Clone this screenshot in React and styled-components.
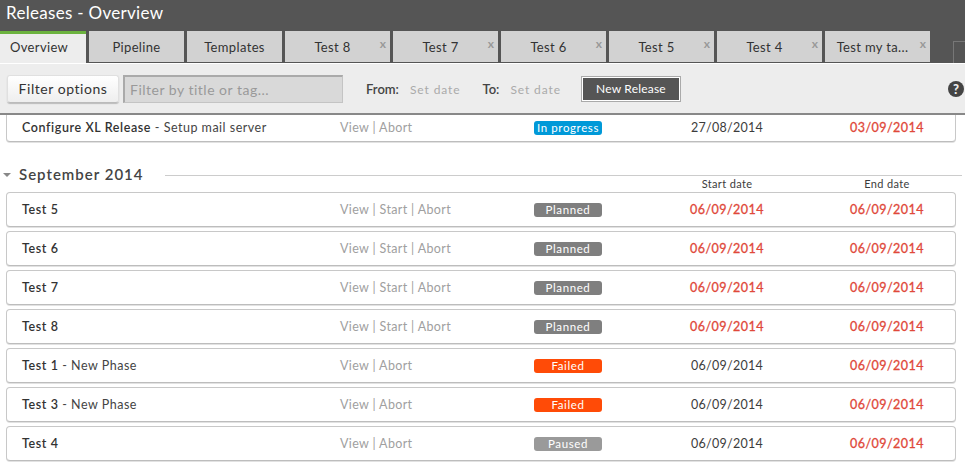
import React from 'react'
import styled, { createGlobalStyle } from 'styled-components'

const Global = createGlobalStyle`
    html, body {
        margin: 0;
        padding: 0;
        background: #fff;
        overflow: hidden;
    }
    body {
        font-family: Lato, "Open Sans", sans-serif;
        color: #333;
    }
`

const tabs = [
    { label: 'Overview', active: true },
    { label: 'Pipeline' },
    { label: 'Templates' },
    { label: 'Test 8', closable: true },
    { label: 'Test 7', closable: true },
    { label: 'Test 6', closable: true },
    { label: 'Test 5', closable: true },
    { label: 'Test 4', closable: true },
    { label: 'Test my ta...', closable: true },
]

const rows = [
    { name: 'Test 5', actions: 'View | Start | Abort', status: 'Planned', start: '06/09/2014', late: true },
    { name: 'Test 6', actions: 'View | Start | Abort', status: 'Planned', start: '06/09/2014', late: true },
    { name: 'Test 7', actions: 'View | Start | Abort', status: 'Planned', start: '06/09/2014', late: true },
    { name: 'Test 8', actions: 'View | Start | Abort', status: 'Planned', start: '06/09/2014', late: true },
    { name: 'Test 1', phase: 'New Phase', actions: 'View | Abort', status: 'Failed', start: '06/09/2014' },
    { name: 'Test 3', phase: 'New Phase', actions: 'View | Abort', status: 'Failed', start: '06/09/2014' },
    { name: 'Test 4', actions: 'View | Abort', status: 'Paused', start: '06/09/2014' },
]

const statusColors = {
    'In progress': '#0099d8',
    Planned: '#7f7f7f',
    Failed: '#ff4b07',
    Paused: '#9a9a9a',
}

function Row({ name, phase, actions, status, start, end = '06/09/2014', late, clipped }) {
    return (
        <Card $clipped={clipped}>
            <Title>
                <strong>{name}</strong>
                {phase && ` - ${phase}`}
            </Title>
            <Actions>{actions}</Actions>
            <Status $color={statusColors[status]}>{status}</Status>
            <StartCell $late={late}>{start}</StartCell>
            <EndCell $late>{end}</EndCell>
        </Card>
    )
}

function App() {
    return (
        <Page>
            <Global />
            <Header>Releases - Overview</Header>
            <TabBar>
                {tabs.map(tab => (
                    <Tab key={tab.label} $active={tab.active} $wide={tab.closable}>
                        {tab.label}
                        {tab.closable && <Close>x</Close>}
                    </Tab>
                ))}
                <CornerBox />
            </TabBar>
            <Toolbar>
                <FilterBtn>Filter options</FilterBtn>
                <Search placeholder="Filter by title or tag..." readOnly />
                <DateLabel $left={23}>From:</DateLabel>
                <SetDate>Set date</SetDate>
                <DateLabel $left={22}>To:</DateLabel>
                <SetDate>Set date</SetDate>
                <NewRelease>New Release</NewRelease>
                <Help>?</Help>
            </Toolbar>
            <List>
                <Row
                    clipped
                    name="Configure XL Release"
                    phase="Setup mail server"
                    actions="View | Abort"
                    status="In progress"
                    start="27/08/2014"
                    end="03/09/2014"
                />
                <Month>
                    <Arrow />
                    <MonthName>September 2014</MonthName>
                    <MonthLine />
                </Month>
                <DateHeads>
                    <StartCell as="span">Start date</StartCell>
                    <EndCell as="span">End date</EndCell>
                </DateHeads>
                <Cards>
                    {rows.map(row => <Row key={row.name} {...row} />)}
                </Cards>
            </List>
        </Page>
    )
}

export default App

const Page = styled.div`
    width: 965px;
    height: 465px;
    overflow: hidden;
`

const Header = styled.div`
    height: 31px;
    background: #555;
    color: #fff;
    font-size: 17px;
    line-height: 25px;
    padding-left: 6px;
    letter-spacing: 0.3px;
    box-sizing: border-box;
`

const TabBar = styled.div`
    display: flex;
    gap: 3px;
    height: 32px;
    background: #555;
`

const Tab = styled.div`
    position: relative;
    box-sizing: border-box;
    width: ${props => props.$active ? '86px' : props.$wide ? '105px' : '95px'};
    height: ${props => props.$active ? '32px' : '31px'};
    background: ${props => props.$active ? '#ededed' : '#d2d2d2'};
    border-top: ${props => props.$active ? '3px solid #6cb33f' : '0'};
    padding-top: ${props => props.$active ? '6px' : '9px'};
    padding-left: ${props => props.$active ? '10px' : '0'};
    padding-right: ${props => props.$wide ? '10px' : '0'};
    text-align: ${props => props.$active ? 'left' : 'center'};
    font-size: 13px;
    line-height: 15px;
    letter-spacing: 0.35px;
    color: #333;
    white-space: nowrap;
`

const Close = styled.span`
    position: absolute;
    top: 7px;
    right: 4px;
    font-size: 12px;
    line-height: 11px;
    font-weight: 700;
    letter-spacing: 0;
    color: #999;
`

const CornerBox = styled.div`
    box-sizing: border-box;
    width: 12px;
    height: 22px;
    margin: 10px 0 0 20px;
    border: 1px solid #777;
    border-right: 0;
    border-bottom: 0;
`

const Toolbar = styled.div`
    box-sizing: border-box;
    display: flex;
    align-items: center;
    height: 52px;
    padding: 1px 1px 0 7px;
    background: #ededed;
    border-top: 1px solid #fff;
    border-bottom: 2px solid #888;
`

const FilterBtn = styled.div`
    box-sizing: border-box;
    width: 112px;
    height: 28px;
    border-radius: 3px;
    background: linear-gradient(#fff, #eee);
    border: 1px solid #e0e0e0;
    border-bottom-color: #bbb;
    box-shadow: 0 1px 1px #bbb;
    font-size: 14px;
    line-height: 26px;
    letter-spacing: 0.55px;
    text-align: center;
    color: #333;
`

const Search = styled.input`
    box-sizing: border-box;
    width: 220px;
    height: 28px;
    margin-left: 4px;
    padding: 0 5px;
    background: #d9d9d9;
    border: 1px solid #c4c4c4;
    border-left: 2px solid #aaa;
    border-top: 2px solid #aaa;
    outline: none;
    font-family: Lato, sans-serif;
    font-size: 14px;
    letter-spacing: 0.5px;
    &::placeholder {
        color: #999;
        opacity: 1;
    }
`

const DateLabel = styled.span`
    margin-left: ${props => props.$left}px;
    font-size: 13px;
    font-weight: 600;
    color: #444;
`

const SetDate = styled.span`
    margin-left: 11px;
    font-size: 12px;
    letter-spacing: 0.9px;
    color: #aaa;
`

const NewRelease = styled.div`
    box-sizing: border-box;
    width: 100px;
    height: 26px;
    margin-left: 20px;
    background: #555;
    border: 2px solid #fff;
    outline: 1px solid #aaa;
    outline-offset: -1px;
    color: #fff;
    font-size: 12px;
    line-height: 22px;
    letter-spacing: 0.2px;
    text-align: center;
`

const Help = styled.div`
    width: 16px;
    height: 16px;
    margin-left: auto;
    border-radius: 50%;
    background: #444;
    color: #ededed;
    font-size: 13px;
    font-weight: 900;
    line-height: 16px;
    text-align: center;
`

const List = styled.div`
    padding: 0 9px 0 6px;
`

const Card = styled.div`
    box-sizing: border-box;
    display: flex;
    align-items: center;
    height: ${props => props.$clipped ? '27px' : '35px'};
    padding: ${props => props.$clipped ? '0 0 1px 15px' : '0 0 0 15px'};
    border: 1px solid #c8c8c8;
    border-top-width: ${props => props.$clipped ? '0' : '1px'};
    border-bottom-color: #bdbdbd;
    border-radius: ${props => props.$clipped ? '0 0 4px 4px' : '4px'};
    box-shadow: 0 1px 0 #e2e2e2;
    background: #fff;
`

const Title = styled.div`
    width: 318px;
    font-size: 12.5px;
    letter-spacing: 0.5px;
    color: #444;
    white-space: nowrap;
    strong {
        font-weight: 600;
        color: #333;
        letter-spacing: 0.6px;
    }
`

const Actions = styled.div`
    width: 194px;
    font-size: 12.5px;
    letter-spacing: 0.35px;
    color: #a0a0a0;
`

const Status = styled.div`
    width: 68px;
    height: 14px;
    border-radius: 3px;
    background: ${props => props.$color};
    color: #fff;
    font-size: 11.5px;
    line-height: 14px;
    letter-spacing: 0.6px;
    text-align: center;
`

const StartCell = styled.div`
    width: 120px;
    margin-left: 65px;
    text-align: center;
    font-size: 12.5px;
    letter-spacing: ${props => props.$late ? '0.45px' : '0.25px'};
    -webkit-text-stroke: ${props => props.$late ? '0.3px' : '0'};
    color: ${props => props.$late ? '#e0483a' : '#3c3c3c'};
`

const EndCell = styled(StartCell)`
    margin-left: 40px;
`

const Month = styled.div`
    display: flex;
    align-items: center;
    height: 12px;
    margin: 26px 0 0 -6px;
`

const Arrow = styled.div`
    width: 0;
    height: 0;
    margin: 2px 0 0 3px;
    border-left: 4px solid transparent;
    border-right: 4px solid transparent;
    border-top: 4px solid #888;
`

const MonthName = styled.div`
    width: 146px;
    margin-left: 8px;
    font-size: 15px;
    font-weight: 600;
    letter-spacing: 1px;
    color: #444;
`

const MonthLine = styled.div`
    flex: 1;
    height: 1px;
    margin: 2px -6px 0 0;
    background: #ccc;
`

const DateHeads = styled.div`
    display: flex;
    height: 12px;
    padding-left: 596px;
    font-size: 11px;
    line-height: 8px;
    & > span {
        font-size: 11px;
        letter-spacing: 0.35px;
    }
`

const Cards = styled.div`
    display: flex;
    flex-direction: column;
    gap: 4px;
`
